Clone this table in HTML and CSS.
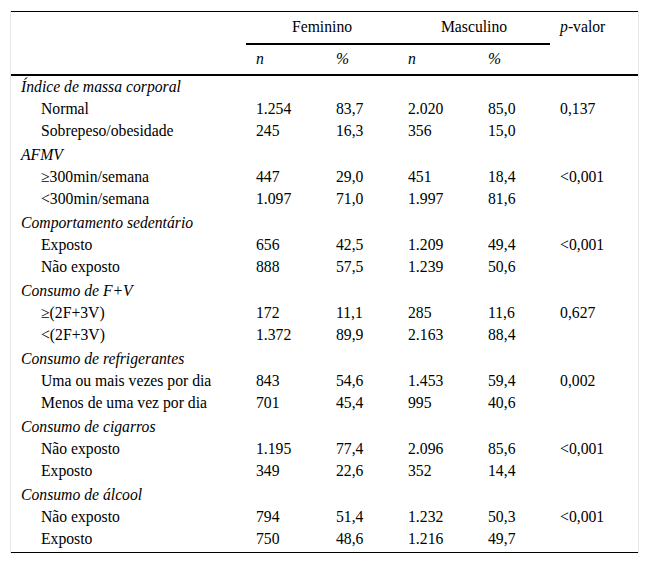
FILE: index.html
```html
<!DOCTYPE html>
<html lang="pt">
<head>
<meta charset="utf-8">
<title>Tabela</title>
<link rel="stylesheet" href="styles.css">
</head>
<body>
<div class="frame">
<table class="data">
<colgroup>
<col class="c-label"><col class="c-n"><col class="c-p"><col class="c-n"><col class="c-p"><col class="c-val">
</colgroup>
<thead>
<tr class="h1">
<th class="blank" rowspan="2"></th>
<th class="group" colspan="2">Feminino</th>
<th class="group" colspan="2">Masculino</th>
<th class="pval" rowspan="2"><i>p</i>-valor</th>
</tr>
<tr class="h2">
<th><i>n</i></th><th><i>%</i></th><th><i>n</i></th><th><i>%</i></th>
</tr>
</thead>
<tbody>
<tr class="cat"><td colspan="6">Índice de massa corporal</td></tr>
<tr><td class="sub">Normal</td><td>1.254</td><td>83,7</td><td>2.020</td><td>85,0</td><td>0,137</td></tr>
<tr><td class="sub">Sobrepeso/obesidade</td><td>245</td><td>16,3</td><td>356</td><td>15,0</td><td></td></tr>
<tr class="cat"><td colspan="6">AFMV</td></tr>
<tr><td class="sub">≥300min/semana</td><td>447</td><td>29,0</td><td>451</td><td>18,4</td><td>&lt;0,001</td></tr>
<tr><td class="sub">&lt;300min/semana</td><td>1.097</td><td>71,0</td><td>1.997</td><td>81,6</td><td></td></tr>
<tr class="cat"><td colspan="6">Comportamento sedentário</td></tr>
<tr><td class="sub">Exposto</td><td>656</td><td>42,5</td><td>1.209</td><td>49,4</td><td>&lt;0,001</td></tr>
<tr><td class="sub">Não exposto</td><td>888</td><td>57,5</td><td>1.239</td><td>50,6</td><td></td></tr>
<tr class="cat"><td colspan="6">Consumo de F+V</td></tr>
<tr><td class="sub">≥(2F+3V)</td><td>172</td><td>11,1</td><td>285</td><td>11,6</td><td>0,627</td></tr>
<tr><td class="sub">&lt;(2F+3V)</td><td>1.372</td><td>89,9</td><td>2.163</td><td>88,4</td><td></td></tr>
<tr class="cat"><td colspan="6">Consumo de refrigerantes</td></tr>
<tr><td class="sub">Uma ou mais vezes por dia</td><td>843</td><td>54,6</td><td>1.453</td><td>59,4</td><td>0,002</td></tr>
<tr><td class="sub">Menos de uma vez por dia</td><td>701</td><td>45,4</td><td>995</td><td>40,6</td><td></td></tr>
<tr class="cat"><td colspan="6">Consumo de cigarros</td></tr>
<tr><td class="sub">Não exposto</td><td>1.195</td><td>77,4</td><td>2.096</td><td>85,6</td><td>&lt;0,001</td></tr>
<tr><td class="sub">Exposto</td><td>349</td><td>22,6</td><td>352</td><td>14,4</td><td></td></tr>
<tr class="cat"><td colspan="6">Consumo de álcool</td></tr>
<tr><td class="sub">Não exposto</td><td>794</td><td>51,4</td><td>1.232</td><td>50,3</td><td>&lt;0,001</td></tr>
<tr><td class="sub">Exposto</td><td>750</td><td>48,6</td><td>1.216</td><td>49,7</td><td></td></tr>
</tbody>
</table>
</div>
</body>
</html>
```

FILE: styles.css
```css
html, body {
  margin: 0;
  padding: 0;
  background: #fff;
}

body {
  font-family: "Liberation Serif", Tinos, "Times New Roman", serif;
  font-size: 15.7px;
  color: #000;
}

.frame {
  margin: 11px 0 0 10px;
  width: 627px;
  border-left: 1px solid #e6e6e6;
  border-right: 1px solid #e6e6e6;
}

.data {
  width: 627px;
  table-layout: fixed;
  border-collapse: separate;
  border-spacing: 0;
  border-top: 1px solid #000;
  border-bottom: 1px solid #000;
  font-family: inherit;
  font-size: inherit;
  color: inherit;
}

.c-label { width: 235px; }
.c-n { width: 80px; }
.c-p { width: 72px; }
.c-val { width: 88px; }

th, td {
  padding: 0 0 0 10px;
  text-align: left;
  font-weight: normal;
  vertical-align: top;
  white-space: nowrap;
}

td {
  line-height: 18px;
  height: 18px;
  padding-bottom: 4px;
}

th {
  line-height: 22px;
  height: 22px;
}

.h1 th {
  padding-top: 4px;
  padding-bottom: 5px;
}

.h1 th.group {
  text-align: center;
  padding-left: 0;
  border-bottom: 2px solid #000;
}

.h1 th.blank,
.h1 th.pval {
  border-bottom: 2px solid #000;
}

.h2 th {
  padding-top: 3px;
  padding-bottom: 4px;
  border-bottom: 2px solid #000;
}

.cat td {
  font-style: italic;
  padding-top: 2px;
}

td.sub {
  padding-left: 30px;
}
```
